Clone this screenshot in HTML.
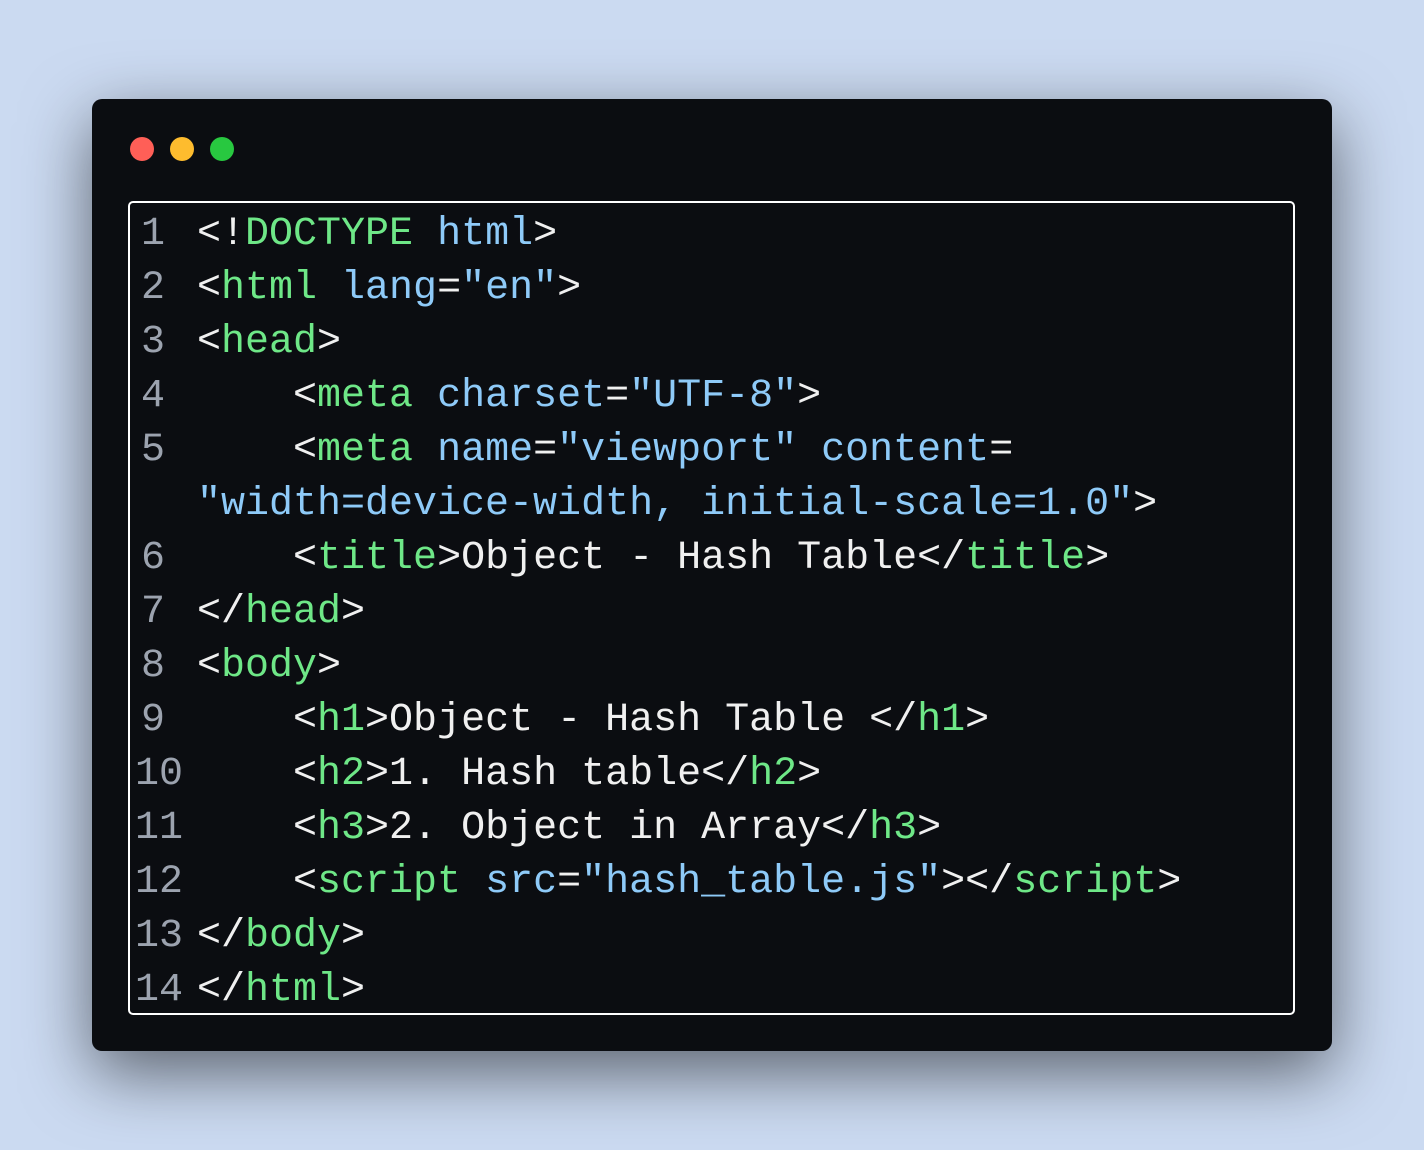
<!DOCTYPE html>
<html><head><style>
html,body{margin:0;padding:0;}
body{width:1424px;height:1150px;background:#cbdaf1;position:relative;overflow:hidden;}
.win{position:absolute;left:92px;top:99px;width:1240px;height:952px;background:#0b0d11;border-radius:10px;box-shadow:0 22px 68px rgba(0,0,0,0.55);}
.dot{position:absolute;top:38px;width:24px;height:24px;border-radius:50%;}
.box{position:absolute;left:36px;top:102px;width:1163px;height:810px;border:2px solid #fff;border-radius:5px;}
.ln{position:absolute;font-family:"Liberation Mono",monospace;font-size:40px;line-height:54px;white-space:pre;color:#f0f0f0;}
.n{color:#9ca3af;}
.g{color:#6ee787;}
.b{color:#8ecaf8;}
</style></head><body>
<div class="win">
<div class="dot" style="left:38px;background:#ff5f57;"></div>
<div class="dot" style="left:78px;background:#febc2e;"></div>
<div class="dot" style="left:118px;background:#28c840;"></div>
</div>
<div class="ln n" style="left:141px;top:208px;">1</div>
<div class="ln n" style="left:141px;top:262px;">2</div>
<div class="ln n" style="left:141px;top:316px;">3</div>
<div class="ln n" style="left:141px;top:370px;">4</div>
<div class="ln n" style="left:141px;top:424px;">5</div>
<div class="ln n" style="left:141px;top:532px;">6</div>
<div class="ln n" style="left:141px;top:586px;">7</div>
<div class="ln n" style="left:141px;top:640px;">8</div>
<div class="ln n" style="left:141px;top:694px;">9</div>
<div class="ln n" style="left:135px;top:748px;">10</div>
<div class="ln n" style="left:135px;top:802px;">11</div>
<div class="ln n" style="left:135px;top:856px;">12</div>
<div class="ln n" style="left:135px;top:910px;">13</div>
<div class="ln n" style="left:135px;top:964px;">14</div>

<div class="ln" style="left:197px;top:208px;">&lt;!<span class="g">DOCTYPE</span> <span class="b">html</span>&gt;</div>
<div class="ln" style="left:197px;top:262px;">&lt;<span class="g">html</span> <span class="b">lang</span>=<span class="b">"en"</span>&gt;</div>
<div class="ln" style="left:197px;top:316px;">&lt;<span class="g">head</span>&gt;</div>
<div class="ln" style="left:197px;top:370px;">    &lt;<span class="g">meta</span> <span class="b">charset</span>=<span class="b">"UTF-8"</span>&gt;</div>
<div class="ln" style="left:197px;top:424px;">    &lt;<span class="g">meta</span> <span class="b">name</span>=<span class="b">"viewport"</span> <span class="b">content</span>=</div>
<div class="ln" style="left:197px;top:478px;"><span class="b">"width=device-width, initial-scale=1.0"</span>&gt;</div>
<div class="ln" style="left:197px;top:532px;">    &lt;<span class="g">title</span>&gt;Object - Hash Table&lt;/<span class="g">title</span>&gt;</div>
<div class="ln" style="left:197px;top:586px;">&lt;/<span class="g">head</span>&gt;</div>
<div class="ln" style="left:197px;top:640px;">&lt;<span class="g">body</span>&gt;</div>
<div class="ln" style="left:197px;top:694px;">    &lt;<span class="g">h1</span>&gt;Object - Hash Table &lt;/<span class="g">h1</span>&gt;</div>
<div class="ln" style="left:197px;top:748px;">    &lt;<span class="g">h2</span>&gt;1. Hash table&lt;/<span class="g">h2</span>&gt;</div>
<div class="ln" style="left:197px;top:802px;">    &lt;<span class="g">h3</span>&gt;2. Object in Array&lt;/<span class="g">h3</span>&gt;</div>
<div class="ln" style="left:197px;top:856px;">    &lt;<span class="g">script</span> <span class="b">src</span>=<span class="b">"hash_table.js"</span>&gt;&lt;/<span class="g">script</span>&gt;</div>
<div class="ln" style="left:197px;top:910px;">&lt;/<span class="g">body</span>&gt;</div>
<div class="ln" style="left:197px;top:964px;">&lt;/<span class="g">html</span>&gt;</div>
<div class="box" style="left:128px;top:201px;"></div>
</body></html>
